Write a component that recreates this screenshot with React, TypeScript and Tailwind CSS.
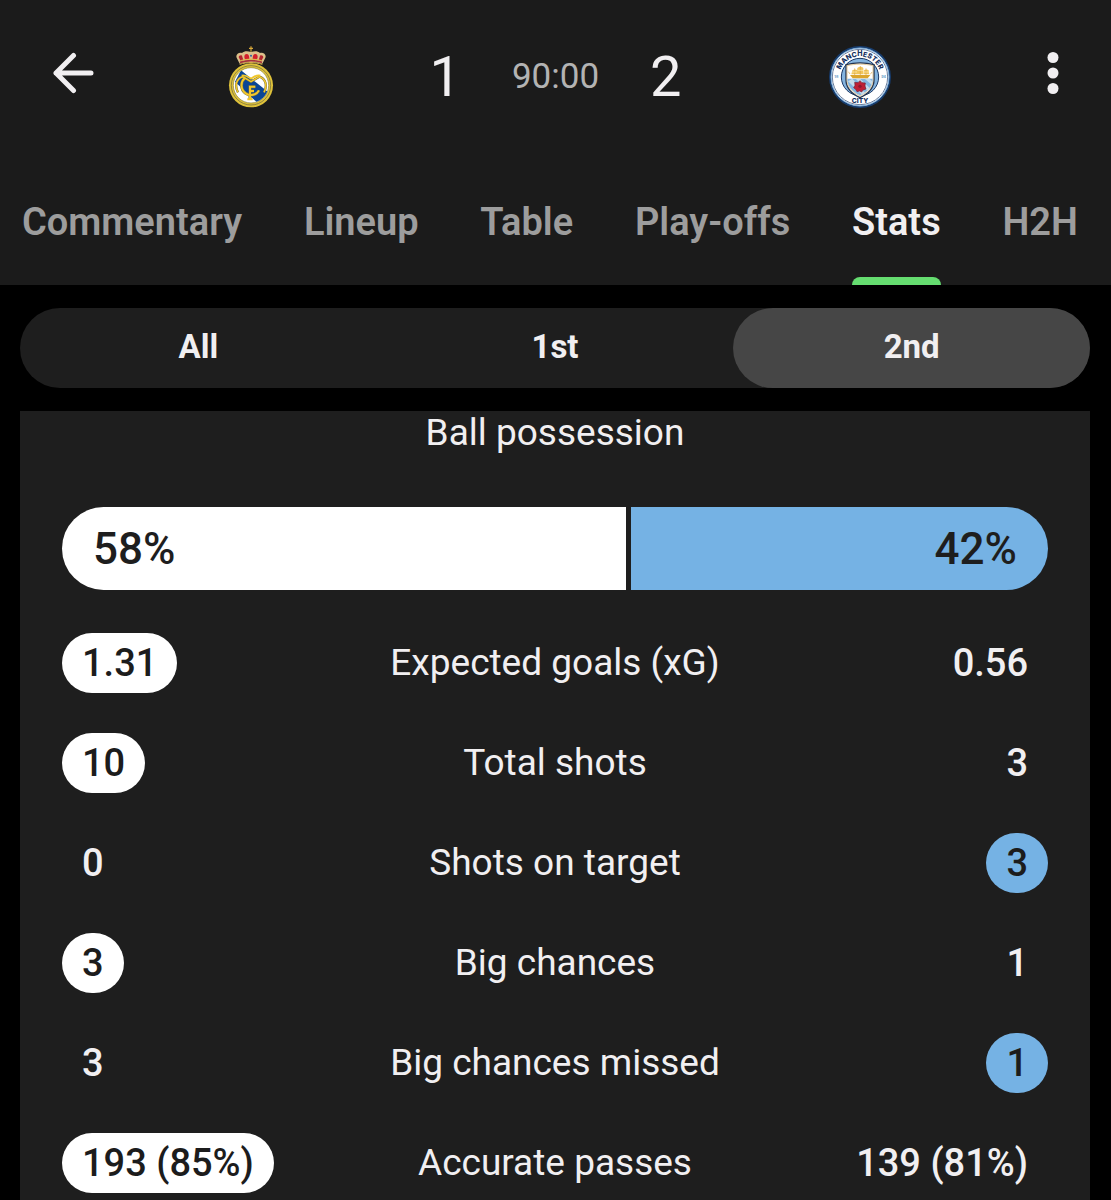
import { useState } from 'react';
import clsx from 'clsx';

const tabs = ['Commentary', 'Lineup', 'Table', 'Play-offs', 'Stats', 'H2H'];
const periods = ['All', '1st', '2nd'];

type Side = 'home' | 'away';

type Stat = {
  label: string;
  home: string;
  away: string;
  lead: Side;
};

const possession = { home: 57.51, away: 42.49 };

const stats: Stat[] = [
  { label: 'Expected goals (xG)', home: '1.31', away: '0.56', lead: 'home' },
  { label: 'Total shots', home: '10', away: '3', lead: 'home' },
  { label: 'Shots on target', home: '0', away: '3', lead: 'away' },
  { label: 'Big chances', home: '3', away: '1', lead: 'home' },
  { label: 'Big chances missed', home: '3', away: '1', lead: 'away' },
  { label: 'Accurate passes', home: '193 (85%)', away: '139 (81%)', lead: 'home' },
];

function BackIcon() {
  return (
    <svg className="h-[42px] w-[42px]" viewBox="0 0 42 42" fill="none" stroke="#f1eff1" strokeWidth="5" strokeLinecap="round" strokeLinejoin="round">
      <path d="M39 21H4M21.500 3.500 4 21l17.500 17.500" />
    </svg>
  );
}

function MoreIcon() {
  return (
    <svg className="h-[42px] w-3" viewBox="0 0 12 42" fill="#f1eff1">
      <circle cx="6" cy="5.500" r="5.500" />
      <circle cx="6" cy="21" r="5.500" />
      <circle cx="6" cy="36.500" r="5.500" />
    </svg>
  );
}

function MadridCrest() {
  return (
    <svg className="h-[62px] w-[46px]" viewBox="53 35 138 186" role="img" aria-label="Real Madrid">
      {/* crown */}
      <path d="M122 36v16M116 42h12" stroke="#d9a93a" strokeWidth="3.500" />
      <path d="M88 88 79 70c-4-9 6-17 16-14 6-6 16-7 27-3 11-4 21-3 27 3 10-3 20 5 16 14l-9 18c-22-6-46-6-68 0Z" fill="#dcc08a" />
      <path d="M91 80 85 69c0-6 7-8 10-5l4 13ZM153 80l6-11c0-6-7-8-10-5l-4 13Z" fill="#b3262e" />
      <path d="M104 75c-4-9-2-15 5-16 5 0 8 4 8 15ZM140 75c4-9 2-15-5-16-5 0-8 4-8 15Z" fill="#d4202c" />
      <path d="M89 84c22-7 44-7 66 0" fill="none" stroke="#a8323a" strokeWidth="5" />
      <path d="M88 90c22-7 46-7 68 0M90 79c21-6 43-6 64 0" fill="none" stroke="#e2b84a" strokeWidth="3" />
      <circle cx="122" cy="64" r="3" fill="#2b5ea8" />
      {/* roundel */}
      <circle cx="122" cy="153" r="66" fill="#dfc23a" />
      <circle cx="122" cy="153" r="59" fill="none" stroke="#7d7640" strokeWidth="2.500" />
      <circle cx="122" cy="153" r="53" fill="#fff" stroke="#8b8238" strokeWidth="2" />
      <clipPath id="madrid-field">
        <circle cx="122" cy="153" r="52" />
      </clipPath>
      <path d="M74 142 92 108l82 66-28 36Z" fill="#0a4595" clipPath="url(#madrid-field)" />
      {/* monogram */}
      <g fill="none" stroke="#6f6c44" strokeWidth="9">
        <path d="M146 168c-7 14-26 19-40 9-16-12-16-34-3-45" />
        <path d="M83 174c-11-20-5-41 14-47l25 15 25-15c19 6 25 27 14 47" strokeWidth="7" />
        <path d="M119 197v-40h16M119 170h12" />
      </g>
      <g fill="none" stroke="#f1c72b" strokeWidth="6">
        <path d="M146 168c-7 14-26 19-40 9-16-12-16-34-3-45" />
        <path d="M83 174c-11-20-5-41 14-47l25 15 25-15c19 6 25 27 14 47" strokeWidth="4.500" />
        <path d="M94 124c10-4 20 4 28 9 8-5 18-13 28-9" strokeWidth="6" />
        <path d="M119 197v-40h16M119 170h12M111 195h16" />
      </g>
    </svg>
  );
}

function CityCrest() {
  return (
    <svg className="h-[62px] w-[62px]" viewBox="40 32 186 186" role="img" aria-label="Manchester City">
      <circle cx="133" cy="125" r="93" fill="#173c6d" />
      <circle cx="133" cy="125" r="87" fill="#fff" stroke="#7db0de" strokeWidth="3" />
      <circle cx="133" cy="125" r="83" fill="#fff" stroke="#1d3d6c" strokeWidth="2" />
      <circle cx="133" cy="125" r="56" fill="#84b4df" stroke="#1c3966" strokeWidth="3" />
      <path d="M91 88c28-7 56-7 84 0v45c0 26-17 42-42 54-25-12-42-28-42-54Z" fill="#fff" stroke="#26354f" strokeWidth="4" />
      <path d="M94 91c26-6 52-6 78 0v41c0 24-16 38-39 50-23-12-39-26-39-50Z" fill="#fff" stroke="#d3ad68" strokeWidth="2" />
      <path d="M95 130h76c0 24-15 38-38 50-23-12-38-26-38-50Z" fill="#83b6e2" />
      <path d="m97 138 13-8 38 42-9 6ZM120 130h13l29 28-6 8ZM147 130h14l9 8-2 10Z" fill="#c5dcec" />
      {/* ship */}
      <path d="M103 119h61l-8 10h-45Z" fill="#dba52d" />
      <path d="M110 105c6-3 11-3 15 0v12h-18ZM125 98c7-5 14-4 18 0v19h-20ZM145 104c6-3 11-2 14 1l2 12h-17Z" fill="#f1c65c" />
      <path d="M117 99v20M134 92v28M151 99v20M103 116l-5-7M164 117l5-7" stroke="#dba544" strokeWidth="2" />
      <path d="M109 110h15M125 105h18M145 110h15" stroke="#fff0bd" strokeWidth="2" />
      {/* rose */}
      <path d="m133 136 6 6 10 1-1 9 3 9-9 3-4 6-6-3-8 2-4-7-6-5 4-7-1-9 10 1Z" fill="#be2036" stroke="#6a2238" strokeWidth="2" />
      <circle cx="133" cy="153" r="5" fill="#8d1930" />
      <path id="city-arc" d="M71 125a62 62 0 0 1 124 0" fill="none" />
      <g fill="#17325f" fontFamily="Inter, sans-serif" fontWeight="800" textAnchor="middle">
        <text fontSize="21">
          <textPath href="#city-arc" startOffset="50%">MANCHESTER</textPath>
        </text>
        <text x="133" y="203" fontSize="20">CITY</text>
        <g fill="#78a8cd" fontSize="11">
          <text x="62" y="129">18</text>
          <text x="204" y="129">94</text>
        </g>
      </g>
    </svg>
  );
}

function StatValue({ value, side, leads }: { value: string; side: Side; leads: boolean }) {
  return (
    <span
      className={clsx(
        'inline-flex h-[60px] items-center rounded-full px-5 align-middle text-[38px]',
        leads && 'text-[#1c1c1c]',
        leads && side === 'home' && 'bg-white',
        leads && side === 'away' && 'bg-[#75b2e4]',
      )}
    >
      {value}
    </span>
  );
}

export default function App() {
  const [tab, setTab] = useState('Stats');
  const [period, setPeriod] = useState('2nd');

  return (
    <div className="flex h-screen flex-col overflow-hidden bg-black font-['Roboto',sans-serif] text-[#f1eff1]">
      <header className="bg-[#1b1b1b]">
        <div className="grid h-40 grid-cols-[146px_1fr_400px_1fr_146px] items-center">
          <button type="button" aria-label="Back" className="justify-self-start pb-3.5 pl-[52px]">
            <BackIcon />
          </button>
          <div className="flex justify-center pb-1.5">
            <MadridCrest />
          </div>
          <div className="flex items-center justify-center gap-[51px] pb-1.5 text-[56px]">
            <span>1</span>
            <span className="text-[35px] text-[#b3b3b3]">90:00</span>
            <span>2</span>
          </div>
          <div className="flex justify-center pb-1.5">
            <CityCrest />
          </div>
          <button type="button" aria-label="More options" className="justify-self-end pr-[52px] pb-3.5">
            <MoreIcon />
          </button>
        </div>

        <nav className="flex h-[125px] justify-between pr-[33px] pl-[22px]">
          {tabs.map((name) => (
            <button
              key={name}
              type="button"
              onClick={() => setTab(name)}
              className={clsx(
                'relative text-[38px] font-semibold whitespace-nowrap',
                name === tab ? 'text-[#f1eff1]' : 'text-[#9d9d9d]',
              )}
            >
              {name}
              {name === tab && <span className="absolute inset-x-0 bottom-0 h-2 rounded-t-lg bg-[#65dd70]" />}
            </button>
          ))}
        </nav>
      </header>

      <div className="mt-[23px] mr-[21px] ml-5 grid h-20 shrink-0 grid-cols-3 rounded-full bg-[#1e1e1e]">
        {periods.map((name) => (
          <button
            key={name}
            type="button"
            onClick={() => setPeriod(name)}
            className={clsx('rounded-full pb-0.5 text-[33px] font-bold', name === period && 'bg-[#464646]')}
          >
            {name}
          </button>
        ))}
      </div>

      <main className="mt-[23px] mr-[21px] ml-5 min-h-0 flex-1 overflow-hidden bg-[#1e1e1e] px-[42px]">
        <h2 className="text-center text-[37px] leading-[44px]">Ball possession</h2>

        <div className="mt-[52px] flex h-[83px] gap-[5px] text-[44px] font-medium text-[#1e1e1e]">
          <div
            className="flex items-center rounded-l-full bg-white pl-[31px]"
            style={{ width: `${possession.home}%` }}
          >
            {Math.round(possession.home)}%
          </div>
          <div
            className="flex items-center justify-end rounded-r-full bg-[#75b2e4] pr-[31px]"
            style={{ width: `${possession.away}%` }}
          >
            {Math.round(possession.away)}%
          </div>
        </div>

        <table className="mt-[23px] w-full table-fixed">
          <tbody>
            {stats.map((stat) => (
              <tr key={stat.label} className="h-[100px]">
                <td className="w-1/4 p-0 text-left font-medium">
                  <StatValue value={stat.home} side="home" leads={stat.lead === 'home'} />
                </td>
                <th scope="row" className="p-0 text-center text-[37px] font-normal">
                  {stat.label}
                </th>
                <td className="w-1/4 p-0 text-right font-medium">
                  <StatValue value={stat.away} side="away" leads={stat.lead === 'away'} />
                </td>
              </tr>
            ))}
          </tbody>
        </table>
      </main>
    </div>
  );
}
